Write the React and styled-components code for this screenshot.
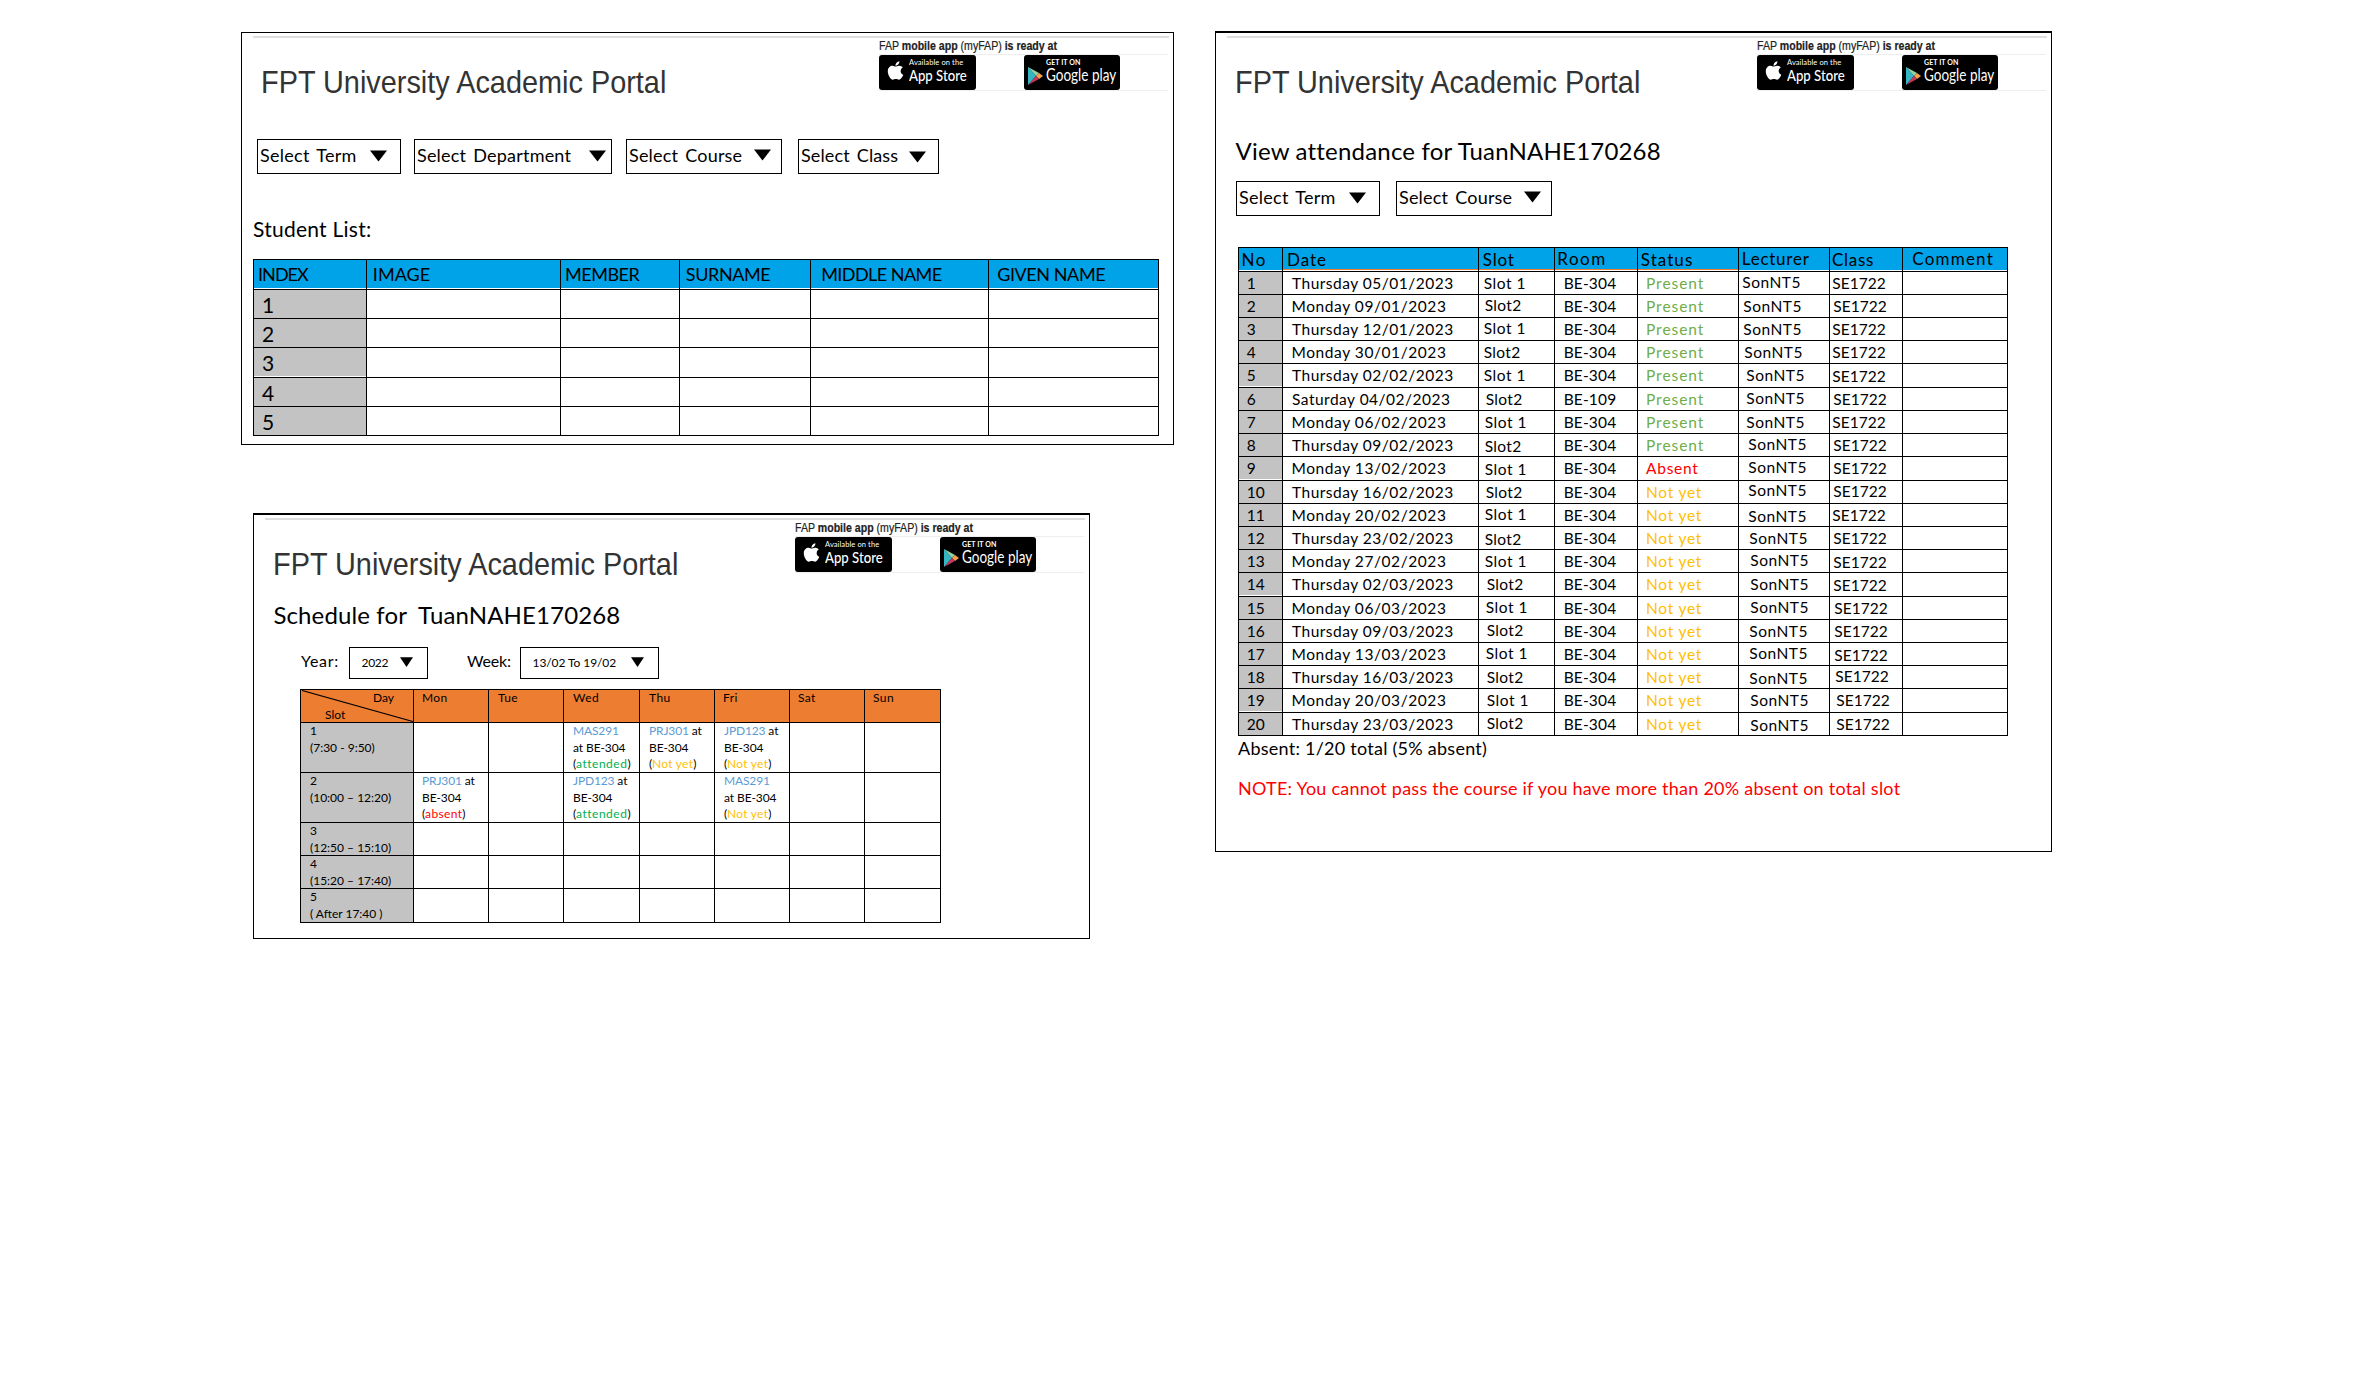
import React from "react";
import styled, { createGlobalStyle } from "styled-components";
import { FaApple } from "react-icons/fa";

const BLUE = "#00a2e8";
const GRAY = "#c3c3c3";
const ORANGE = "#ed7d31";

const GlobalStyle = createGlobalStyle`
  * { box-sizing: border-box; }
  body {
    margin: 0;
    background: #fff;
    color: #000;
    font-family: Lato, "Open Sans", sans-serif;
    white-space: nowrap;
  }
`;

const Page = styled.main`
  display: flex;
  align-items: flex-start;
  width: 2372px;
  height: 1376px;
  padding: 31px 0 0 241px;
  overflow: hidden;
`;

const LeftColumn = styled.div`
  display: flex;
  flex-direction: column;
  gap: 68px;
  width: 933px;
  margin-right: 41px;
  padding-top: 1px;
`;

const Card = styled.section`
  width: ${(p) => p.$width}px;
  height: ${(p) => p.$height}px;
  margin-left: ${(p) => p.$left || 0}px;
  border: 1px solid #000;
  border-top-width: ${(p) => p.$top || 1}px;
`;

/* ---------- card header ---------- */

const HeaderBar = styled.header`
  display: flex;
  justify-content: space-between;
  align-items: flex-start;
  height: 66px;
  margin: 3px 4px 0 11px;
  padding: 0 1px 0 7.5px;
  border-top: 2px solid #dedede;
`;

const PortalTitle = styled.h1`
  margin: 29px 0 0;
  font: 400 32px/30px "Liberation Sans", Arial, sans-serif;
  color: #333;
  transform: scaleX(0.902);
  transform-origin: left;
`;

const AppLinks = styled.div`
  width: 289px;
`;

const Notice = styled.div`
  font: 400 12px/16px "Liberation Sans", Arial, sans-serif;
  color: #222;
  -webkit-text-stroke: 0.2px #222;
  transform: scaleX(0.882);
  transform-origin: left;
`;

const BadgeRow = styled.div`
  display: flex;
  gap: 48px;
  height: 37px;
  border: solid #eee;
  border-width: 1px 0;
`;

const Badge = styled.div`
  display: flex;
  width: ${(p) => p.$width}px;
  height: 35px;
  padding-left: ${(p) => p.$pad}px;
  border-radius: 3px;
  background: #000;
  color: #fff;
`;

const AppleIcon = styled(FaApple)`
  width: 17px;
  height: 21px;
  margin: 5px 5.5px 0 0;
`;

const PlayIcon = styled.svg`
  margin: 11px 3px 0 0;
`;

const BadgeText = styled.div`
  display: flex;
  flex-direction: column;
  padding-top: 3px;
`;

const BadgeSmall = styled.span`
  font-size: ${(p) => p.$size}px;
  line-height: ${(p) => p.$line}px;
  font-weight: ${(p) => p.$weight || 400};
  letter-spacing: 0.1px;
`;

const BadgeLarge = styled.span`
  width: 60px;
  font-size: ${(p) => p.$size}px;
  font-weight: ${(p) => p.$weight || 400};
  line-height: ${(p) => p.$line}px;
  transform: scaleX(${(p) => p.$stretch});
  transform-origin: left;
`;

function Header() {
  return (
    <HeaderBar>
      <PortalTitle>FPT University Academic Portal</PortalTitle>
      <AppLinks>
        <Notice>
          FAP <b>mobile app</b> (myFAP) <b>is ready at</b>
        </Notice>
        <BadgeRow>
          <Badge $width={97} $pad={7.5}>
            <AppleIcon />
            <BadgeText>
              <BadgeSmall $size={7.5} $line={10}>Available on the</BadgeSmall>
              <BadgeLarge $size={15.5} $line={14} $weight={500} $stretch={0.85}>App Store</BadgeLarge>
            </BadgeText>
          </Badge>
          <Badge $width={96} $pad={4}>
            <PlayIcon width="15" height="20" viewBox="0 0 15 20">
              <path d="M0 1 L8 10 L0 19 Z" fill="#35b6c4" />
              <path d="M0 1 L11 7 L8 10 Z" fill="#8fd3a0" />
              <path d="M11 7 L15 10 L11 13 L8 10 Z" fill="#f6a04a" />
              <path d="M0 19 L8 10 L11 13 Z" fill="#c8375c" />
            </PlayIcon>
            <BadgeText>
              <BadgeSmall $size={7} $line={9} $weight={700}>GET IT ON</BadgeSmall>
              <BadgeLarge $size={17} $line={15} $stretch={0.795}>Google play</BadgeLarge>
            </BadgeText>
          </Badge>
        </BadgeRow>
      </AppLinks>
    </HeaderBar>
  );
}

/* ---------- headings and filters ---------- */

const Heading = styled.h2`
  display: flex;
  gap: 11px;
  margin: ${(p) => p.$top}px 0 0 ${(p) => p.$left}px;
  font-size: 24px;
  font-weight: 400;
  line-height: 30px;
  letter-spacing: ${(p) => p.$track}px;
`;

const Caption = styled.p`
  margin: ${(p) => p.$top}px 0 0 ${(p) => p.$left}px;
  font-size: ${(p) => p.$size}px;
  line-height: ${(p) => p.$line}px;
  letter-spacing: ${(p) => p.$track}px;
  color: ${(p) => p.$color || "#000"};
`;

const Filters = styled.div`
  display: flex;
  margin: ${(p) => p.$top}px 0 0 ${(p) => p.$left}px;
`;

const SelectBox = styled.div`
  display: flex;
  justify-content: space-between;
  align-items: flex-start;
  width: ${(p) => p.$width}px;
  height: ${(p) => (p.$small ? 32 : 35)}px;
  margin-left: ${(p) => p.$gap || 0}px;
  padding: 0 ${(p) => p.$right}px 0 ${(p) => (p.$small ? 11.5 : 2)}px;
  border: 1px solid #000;
  font-size: ${(p) => (p.$small ? 12 : 18)}px;
  line-height: ${(p) => (p.$small ? 29 : 30)}px;
  letter-spacing: ${(p) => p.$track}px;
  word-spacing: ${(p) => (p.$small ? 0 : 2.3)}px;
`;

const Arrow = styled.svg`
  flex: none;
  margin-top: ${(p) => p.$drop}px;
`;

const FilterLabel = styled.span`
  width: ${(p) => p.$width}px;
  margin-left: ${(p) => p.$gap || 0}px;
  font-size: 16px;
  line-height: 28px;
  letter-spacing: ${(p) => p.$track}px;
`;

function Select({ label, width, gap, right, track = 0.2, drop, small }) {
  return (
    <SelectBox $width={width} $gap={gap} $right={right} $track={track} $small={small}>
      {label}
      {small ? (
        <Arrow $drop={9} width="13" height="10">
          <path d="M0 0.3 H13 L6.5 10 Z" />
        </Arrow>
      ) : (
        <Arrow $drop={drop ?? 10} width="17" height="12">
          <path d="M0 0.6 H17 L8.5 11.5 Z" />
        </Arrow>
      )}
    </SelectBox>
  );
}

/* ---------- tables ---------- */

const Table = styled.div`
  display: grid;
  grid-template-columns: ${(p) => p.$cols.map((c) => `${c}px`).join(" ")};
  grid-template-rows: ${(p) => p.$rows.map((r) => `${r}px`).join(" ")};
  width: max-content;
  margin: ${(p) => p.$top}px 0 0 ${(p) => p.$left}px;
  border: solid #000;
  border-width: 1px 0 0 1px;
`;

const Cell = styled.div`
  position: relative;
  min-width: 0;
  padding-top: ${(p) => p.$drop || 0}px;
  padding-left: ${(p) => p.$pad || 0}px;
  border: solid #000;
  border-width: 0 1px 1px 0;
  background: ${(p) => p.$bg || "transparent"};
  color: ${(p) => p.$color || "#000"};
  font-size: ${(p) => p.$size}px;
  line-height: ${(p) => p.$line}px;
  letter-spacing: ${(p) => p.$track || 0}px;
  box-shadow: ${(p) =>
    [p.$seam && "inset 0 -1px #fff", p.$rule && `inset 0 -2px ${ORANGE}`].filter(Boolean).join(", ") || "none"};
`;

const Nudge = styled.span`
  display: block;
  margin: ${(p) => p.$y || 0}px 0 0 ${(p) => p.$x || 0}px;
`;

/* Student list */

const STUDENT_HEAD = [
  ["INDEX", 4, -0.95],
  ["IMAGE", 5.8, 0.05],
  ["MEMBER", 4, -0.47],
  ["SURNAME", 5.8, -0.4],
  ["MIDDLE NAME", 10.2, -0.55],
  ["GIVEN NAME", 8.2, -0.42],
];

function StudentList() {
  return (
    <Card $width={933} $height={413}>
      <Header />
      <Filters $top={37} $left={15}>
        <Select label="Select Term" width={144} right={13} track={0.27} />
        <Select label="Select Department" width={198} gap={13} right={5} track={0.2} />
        <Select label="Select Course" width={156} gap={14} right={10} track={0.19} drop={9} />
        <Select label="Select Class" width={141} gap={16} right={12} track={0.12} drop={11} />
      </Filters>
      <Caption $top={41} $left={11} $size={21} $line={28} $track={0.25}>
        Student List:
      </Caption>
      <Table $top={16} $left={11} $cols={[113, 194, 119, 131, 178, 170]} $rows={[30, 29, 29, 30, 29, 29]}>
        {STUDENT_HEAD.map(([text, pad, track]) => (
          <Cell key={text} $bg={BLUE} $seam $pad={pad} $track={track} $size={18} $line={29}>
            {text}
          </Cell>
        ))}
        {[1, 2, 3, 4, 5].map((n) => (
          <React.Fragment key={n}>
            <Cell $bg={GRAY} $seam={n === 3} $pad={8} $size={21} $line={30}>
              {n}
            </Cell>
            {[1, 2, 3, 4, 5].map((c) => (
              <Cell key={c} />
            ))}
          </React.Fragment>
        ))}
      </Table>
    </Card>
  );
}

/* Weekly schedule */

const SlashLine = styled.svg`
  position: absolute;
  inset: 0;
`;

const Code = styled.span`
  color: #5b9bd5;
  letter-spacing: -0.15px;
`;

const State = styled.span`
  color: ${(p) => p.$color};
  letter-spacing: ${(p) => p.$track || 0}px;
`;

const STATES = {
  attended: ["#00b050", 0.5],
  absent: ["#ff0000", 0.35],
  "Not yet": ["#ffc000", 0.25],
};

const DAYS = ["Mon", "Tue", "Wed", "Thu", "Fri", "Sat", "Sun"];

const SCHEDULE = [
  ["(7:30 - 9:50)", { Wed: ["MAS291", "attended"], Thu: ["PRJ301", "Not yet"], Fri: ["JPD123", "Not yet"] }],
  ["(10:00 – 12:20)", { Mon: ["PRJ301", "absent"], Wed: ["JPD123", "attended"], Fri: ["MAS291", "Not yet"] }],
  ["(12:50 – 15:10)", {}],
  ["(15:20 – 17:40)", {}],
  ["( After 17:40 )", {}],
];

function Lesson({ code, state }) {
  const [color, track] = STATES[state];
  const wide = code === "MAS291";
  return (
    <>
      <Code>{code}</Code>
      {wide ? <br /> : " at"}
      {wide ? "at " : <br />}
      BE-304
      <br />(<State $color={color} $track={track}>{state}</State>)
    </>
  );
}

function Schedule() {
  const text = { $size: 12, $line: 16.5, $drop: 0.4 };
  return (
    <Card $width={837} $height={426} $left={12} $top={2}>
      <Header />
      <Heading $top={16} $left={19.4} $track={0.13}>
        <span>Schedule for</span>
        <span>TuanNAHE170268</span>
      </Heading>
      <Filters $top={17} $left={47}>
        <FilterLabel $width={48} $track={0.7}>Year:</FilterLabel>
        <Select small label="2022" width={79} right={14} track={-0.3} />
        <FilterLabel $gap={39} $width={53} $track={-0.2}>Week:</FilterLabel>
        <Select small label="13/02 To 19/02" width={139} right={14} track={-0.08} />
      </Filters>
      <Table $top={10} $left={46} $cols={[113, 75, 75, 76, 75, 75, 75, 76]} $rows={[33, 50, 50, 33, 33, 34]}>
        <Cell {...text} $bg={ORANGE}>
          <SlashLine width="112" height="32">
            <path d="M1 0.5 L112 31.5" stroke="#000" strokeWidth="1.2" />
          </SlashLine>
          <Nudge $x={72}>Day</Nudge>
          <Nudge $x={24}>Slot</Nudge>
        </Cell>
        {DAYS.map((day) => (
          <Cell {...text} key={day} $bg={ORANGE} $pad={"TW".includes(day[0]) ? 9 : 8} $track={0.4}>
            {day}
          </Cell>
        ))}
        {SCHEDULE.map(([time, lessons], i) => (
          <React.Fragment key={time}>
            <Cell {...text} $bg={GRAY} $pad={9}>
              {i + 1}
              <br />
              {time}
            </Cell>
            {DAYS.map((day) => (
              <Cell {...text} key={day} $pad={day === "Mon" ? 8 : 9} $track={-0.1}>
                {lessons[day] && <Lesson code={lessons[day][0]} state={lessons[day][1]} />}
              </Cell>
            ))}
          </React.Fragment>
        ))}
      </Table>
    </Card>
  );
}

/* Attendance report */

const ATTENDANCE_HEAD = [
  { text: "No", pad: 2.6, track: 1.4, y: 1 },
  { text: "Date", pad: 4, track: 0.95, y: 0.5, rule: true },
  { text: "Slot", pad: 3.8, track: 0.8, y: 1, rule: true },
  { text: "Room", pad: 2.2, track: 1.6, y: -0.5, rule: true },
  { text: "Status", pad: 2.8, track: 1.05, y: 0.5, rule: true },
  { text: "Lecturer", pad: 2.8, track: 0.75 },
  { text: "Class", pad: 2, track: 0.7, y: 0.5 },
  { text: "Comment", pad: 9.3, track: 1.2 },
];

const STATUS = {
  Present: ["#70ad47", 0.95],
  Absent: ["#ff0000", 0.75],
  "Not yet": ["#ffc000", 0.75],
};

/* date, slot offset, lecturer offset, class offset */
const ATTENDANCE = [
  ["Thursday 05/01/2023", [0, 0], [0, -1], [0, 0]],
  ["Monday 09/01/2023", [1, -1], [1, 0], [1, 0]],
  ["Thursday 12/01/2023", [0, -1], [1, 0], [0, 0]],
  ["Monday 30/01/2023", [0, 0], [2, 0], [0, 0]],
  ["Thursday 02/02/2023", [0, 0], [4, 0], [0, 1]],
  ["Saturday 04/02/2023", [2, 0], [4, -1], [1, 0]],
  ["Monday 06/02/2023", [1, 0], [4, 0], [0, 0]],
  ["Thursday 09/02/2023", [1, 1], [6, -1], [1, 0]],
  ["Monday 13/02/2023", [1, 1], [6, -1], [1, 0]],
  ["Thursday 16/02/2023", [2, 0], [6, -2], [1, -1]],
  ["Monday 20/02/2023", [1, -1], [6, 1], [0, 0]],
  ["Thursday 23/02/2023", [1, 1], [7, 0], [1, 0]],
  ["Monday 27/02/2023", [1, 0], [8, -1], [1, 1]],
  ["Thursday 02/03/2023", [3, 0], [8, 0], [1, 1]],
  ["Monday 06/03/2023", [2, -1], [8, -1], [2, 0]],
  ["Thursday 09/03/2023", [3, -1], [7, 0], [2, 0]],
  ["Monday 13/03/2023", [2, -1], [7, -1], [2, 1]],
  ["Thursday 16/03/2023", [3, 0], [7, 1], [3, -1]],
  ["Monday 20/03/2023", [3, 0], [8, 0], [4, 0]],
  ["Thursday 23/03/2023", [3, -1], [8, 1], [4, 0]],
];

const TALL_ROWS = [5, 9, 14, 19];
const ATTENDANCE_ROWS = [24, ...ATTENDANCE.map((_, i) => (TALL_ROWS.includes(i + 1) ? 24 : 23))];

function statusOf(n) {
  if (n < 9) return "Present";
  return n === 9 ? "Absent" : "Not yet";
}

function AttendanceRow({ n, date, slot, lecturer, klass }) {
  const status = statusOf(n);
  const [color, track] = STATUS[status];
  const text = { $size: 15.5, $line: 22, $drop: 0.3 };
  return (
    <>
      <Cell {...text} $bg={GRAY} $pad={7.7} $seam={TALL_ROWS.includes(n)}>{n}</Cell>
      <Cell {...text} $pad={date[0] === "M" ? 8.5 : 9} $track={date[0] === "M" ? 0.57 : 0.49}>{date}</Cell>
      <Cell {...text} $pad={4.7} $track={n % 2 ? 0.55 : 0.35}>
        <Nudge $x={slot[0]} $y={slot[1]}>{n % 2 ? "Slot 1" : "Slot2"}</Nudge>
      </Cell>
      <Cell {...text} $pad={8.7} $track={0.15}>{n === 6 ? "BE-109" : "BE-304"}</Cell>
      <Cell {...text} $pad={8} $track={track} $color={color}>{status}</Cell>
      <Cell {...text} $pad={3.3} $track={0.5}>
        <Nudge $x={lecturer[0]} $y={lecturer[1]}>SonNT5</Nudge>
      </Cell>
      <Cell {...text} $pad={2.2} $track={0.05}>
        <Nudge $x={klass[0]} $y={klass[1]}>SE1722</Nudge>
      </Cell>
      <Cell {...text} />
    </>
  );
}

function Attendance() {
  return (
    <Card $width={837} $height={821} $top={2}>
      <Header />
      <Heading $top={34} $left={19.5} $track={0.2}>
        View attendance for TuanNAHE170268
      </Heading>
      <Filters $top={15} $left={20}>
        <Select label="Select Term" width={144} right={13} track={0.27} />
        <Select label="Select Course" width={156} gap={16} right={10} track={0.19} drop={9} />
      </Filters>
      <Table $top={31} $left={22} $cols={[44, 196, 76, 83, 101, 91, 73, 105]} $rows={ATTENDANCE_ROWS}>
        {ATTENDANCE_HEAD.map((h) => (
          <Cell key={h.text} $bg={BLUE} $seam $rule={h.rule} $pad={h.pad} $track={h.track} $size={17} $line={22}>
            <Nudge $y={h.y}>{h.text}</Nudge>
          </Cell>
        ))}
        {ATTENDANCE.map(([date, slot, lecturer, klass], i) => (
          <AttendanceRow key={date} n={i + 1} date={date} slot={slot} lecturer={lecturer} klass={klass} />
        ))}
      </Table>
      <Caption $top={0} $left={22} $size={18} $line={24} $track={0.25}>
        Absent: 1/20 total (5% absent)
      </Caption>
      <Caption $top={16} $left={22} $size={18} $line={24} $track={0.235} $color="#ff0000">
        NOTE: You cannot pass the course if you have more than 20% absent on total slot
      </Caption>
    </Card>
  );
}

export default function App() {
  return (
    <>
      <GlobalStyle />
      <Page>
        <LeftColumn>
          <StudentList />
          <Schedule />
        </LeftColumn>
        <Attendance />
      </Page>
    </>
  );
}
